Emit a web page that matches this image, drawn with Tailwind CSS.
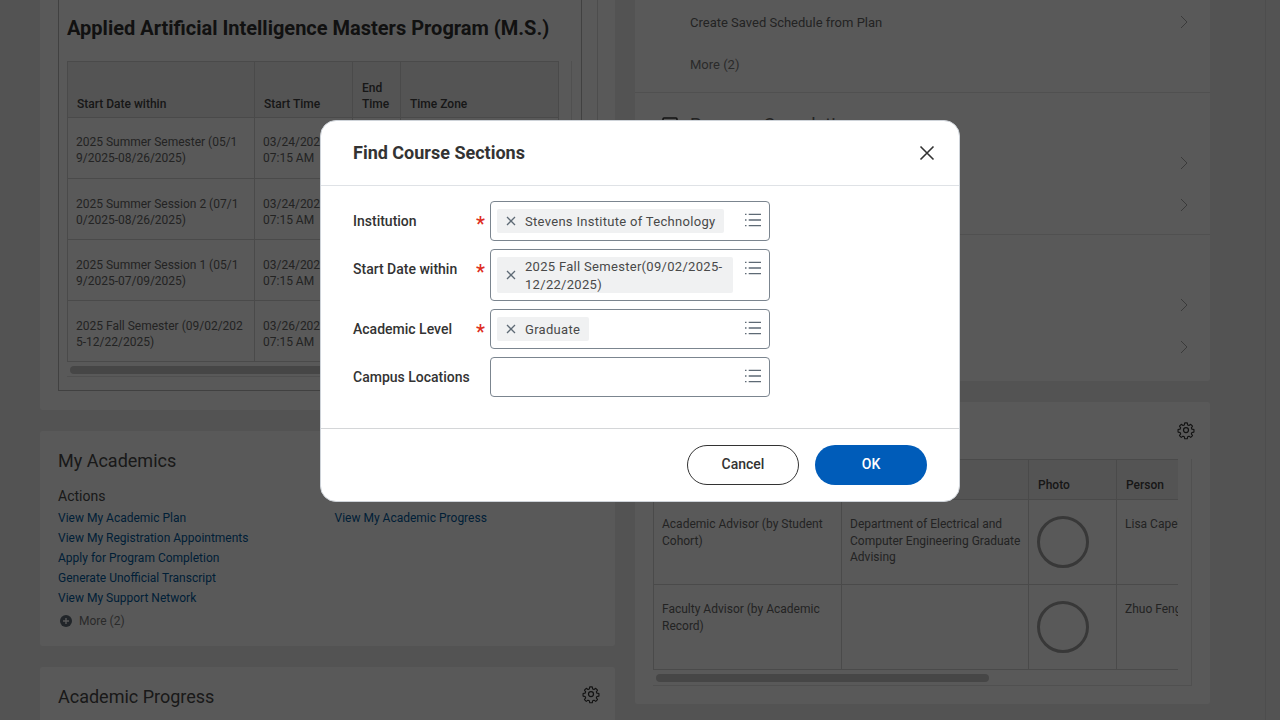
<!DOCTYPE html>
<html lang="en">
<head>
<meta charset="UTF-8">
<title>Find Course Sections</title>
<script src="https://cdn.jsdelivr.net/npm/@tailwindcss/browser@4"></script>
</head>
<body class="relative w-[1280px] h-[720px] overflow-hidden bg-[#eeeeee] font-['Roboto',sans-serif] text-[#494949]">

<!-- page behind the dialog -->
<div class="flex items-start gap-5 pl-10 -mt-5 border-r border-[#dcdcdc] w-[1266px] h-[740px]">

  <!-- left column -->
  <div class="w-[575px] shrink-0 flex flex-col gap-[21px]">
    <section class="bg-white rounded-[3px] pl-[18px] pr-[17px] pb-[19px]">
      <div class="border-r border-[#dcdcdc] pr-[15px]">
        <div class="border border-[#b9b9b9] border-t-0 pl-2 pr-[9px] pt-[34px] pb-[13px]">
          <h1 class="text-[20px] leading-[28px] font-bold text-[#333] mb-[19px] whitespace-nowrap">Applied Artificial Intelligence Masters Program (M.S.)</h1>
          <div class="w-[505px] border-r border-b border-[#e6e6e6] h-[316px]">
            <table class="table-fixed w-[491px] border-collapse text-[12px] leading-[16px]">
              <colgroup><col class="w-[187px]"><col class="w-[98px]"><col class="w-[48px]"><col class="w-[158px]"></colgroup>
              <tr class="h-[56px] bg-[#f0f0f0] font-medium align-bottom text-[#444]">
                <td class="border border-[#d4d4d4] px-[9px] pb-[5px]">Start Date within</td>
                <td class="border border-[#d4d4d4] px-[9px] pb-[5px]">Start Time</td>
                <td class="border border-[#d4d4d4] px-[9px] pb-[5px]">End Time</td>
                <td class="border border-[#d4d4d4] px-[9px] pb-[5px]">Time Zone</td>
              </tr>
              <tr class="h-[61px] align-top text-[#666]">
                <td class="border border-[#d4d4d4] px-2 pt-4 break-all">2025 Summer Semester (05/19/2025-08/26/2025)</td>
                <td class="border border-[#d4d4d4] px-2 pt-4">03/24/2025<br>07:15 AM</td>
                <td class="border border-[#d4d4d4]"></td><td class="border border-[#d4d4d4]"></td>
              </tr>
              <tr class="h-[61px] align-top text-[#666]">
                <td class="border border-[#d4d4d4] px-2 pt-[17px] break-all">2025 Summer Session 2 (07/10/2025-08/26/2025)</td>
                <td class="border border-[#d4d4d4] px-2 pt-[17px]">03/24/2025<br>07:15 AM</td>
                <td class="border border-[#d4d4d4]"></td><td class="border border-[#d4d4d4]"></td>
              </tr>
              <tr class="h-[61px] align-top text-[#666]">
                <td class="border border-[#d4d4d4] px-2 pt-[17px] break-all">2025 Summer Session 1 (05/19/2025-07/09/2025)</td>
                <td class="border border-[#d4d4d4] px-2 pt-[17px]">03/24/2025<br>07:15 AM</td>
                <td class="border border-[#d4d4d4]"></td><td class="border border-[#d4d4d4]"></td>
              </tr>
              <tr class="h-[61px] align-top text-[#666]">
                <td class="border border-[#d4d4d4] px-2 pt-[17px] break-all">2025 Fall Semester (09/02/2025-12/22/2025)</td>
                <td class="border border-[#d4d4d4] px-2 pt-[17px]">03/26/2025<br>07:15 AM</td>
                <td class="border border-[#d4d4d4]"></td><td class="border border-[#d4d4d4]"></td>
              </tr>
            </table>
            <div class="ml-[3px] mt-1 h-2 w-[420px] rounded-full bg-[#c8c8c8]"></div>
          </div>
        </div>
      </div>
    </section>

    <section class="bg-white rounded-[3px] px-[18px] pt-[18px] h-[215px]">
      <h2 class="text-[18px] leading-[24px] text-[#494949]">My Academics</h2>
      <h3 class="mt-[13px] text-[14px] leading-[20px] text-[#494949]">Actions</h3>
      <div class="flex mt-[2px] text-[12px] leading-[20px] text-[#005a9e]">
        <ul class="w-[276.5px]">
          <li>View My Academic Plan</li>
          <li>View My Registration Appointments</li>
          <li>Apply for Program Completion</li>
          <li>Generate Unofficial Transcript</li>
          <li>View My Support Network</li>
        </ul>
        <ul><li>View My Academic Progress</li></ul>
      </div>
      <div class="flex items-center gap-[7px] pl-[2px] mt-[3px] text-[12px] leading-[20px] text-[#7a7a7a]">
        <svg class="w-3 h-3" viewBox="0 0 12 12"><circle cx="6" cy="6" r="6" fill="#5e6a75"/><path d="M6 3v6M3 6h6" stroke="#fff" stroke-width="1.4"/></svg>
        <span>More (2)</span>
      </div>
    </section>

    <section class="bg-white rounded-[3px] px-[18px] pt-[18px] h-[60px] flex justify-between items-start">
      <h2 class="text-[18px] leading-[24px]">Academic Progress</h2>
      <svg class="w-5 h-5 -mr-[4px] -mt-[1px]" viewBox="0 0 24 24" fill="none" stroke="#333" stroke-width="1.5"><circle cx="12" cy="12" r="3"/><path d="M10.3 2.5h3.4l.5 2.7 1.8.8 2.3-1.6 2.4 2.4-1.6 2.3.8 1.8 2.7.5v3.4l-2.7.5-.8 1.8 1.6 2.3-2.4 2.4-2.3-1.6-1.8.8-.5 2.7h-3.4l-.5-2.7-1.8-.8-2.3 1.6-2.4-2.4 1.6-2.3-.8-1.8-2.7-.5v-3.4l2.7-.5.8-1.8-1.6-2.3 2.4-2.4 2.3 1.6 1.8-.8z" stroke-linejoin="round" transform="translate(1.2 1.2) scale(.9)"/></svg>
    </section>
  </div>

  <!-- right column -->
  <div class="w-[575px] shrink-0 flex flex-col gap-[21px]">
    <section class="bg-white rounded-[3px] h-[401px] text-[13px] leading-[20px] text-[#666]">
      <div class="h-[113px] border-b border-[#e6e6e6] pl-[55px] pr-5 pt-[33px]">
        <div class="flex justify-between items-center h-5"><span>Create Saved Schedule from Plan</span>
          <svg class="w-[8px] h-[14px] mr-[2px] mb-[2px]" viewBox="0 0 8 14" fill="none" stroke="#a6a6a6"><path d="M1 1l6 6-6 6"/></svg></div>
        <div class="mt-[22px] text-[#7a7a7a]">More (2)</div>
      </div>
      <div class="h-[142px] border-b border-[#e6e6e6] pl-[27px] pr-5 pt-[20px]">
        <div class="flex items-center gap-3 text-[18px] leading-[24px]">
          <svg class="w-4 h-4" viewBox="0 0 16 16" fill="none" stroke="#333" stroke-width="1.5"><rect x="1" y="1" width="14" height="14" rx="1"/></svg>
          <span>Program Completion</span>
        </div>
        <div class="flex flex-col items-end gap-[28px] mt-[19px] pr-[2px]">
          <svg class="w-[8px] h-[14px]" viewBox="0 0 8 14" fill="none" stroke="#a6a6a6"><path d="M1 1l6 6-6 6"/></svg>
          <svg class="w-[8px] h-[14px]" viewBox="0 0 8 14" fill="none" stroke="#a6a6a6"><path d="M1 1l6 6-6 6"/></svg>
        </div>
      </div>
      <div class="flex flex-col items-end gap-[28px] pr-[22px] pt-[63px]">
        <svg class="w-[8px] h-[14px]" viewBox="0 0 8 14" fill="none" stroke="#a6a6a6"><path d="M1 1l6 6-6 6"/></svg>
        <svg class="w-[8px] h-[14px]" viewBox="0 0 8 14" fill="none" stroke="#a6a6a6"><path d="M1 1l6 6-6 6"/></svg>
      </div>
    </section>

    <section class="bg-white rounded-[3px] h-[302px] pl-[18px] pt-[18px]">
      <div class="flex justify-end pr-[14px] h-5">
        <svg class="w-5 h-5" viewBox="0 0 24 24" fill="none" stroke="#333" stroke-width="1.5"><circle cx="12" cy="12" r="3"/><path d="M10.3 2.5h3.4l.5 2.7 1.8.8 2.3-1.6 2.4 2.4-1.6 2.3.8 1.8 2.7.5v3.4l-2.7.5-.8 1.8 1.6 2.3-2.4 2.4-2.3-1.6-1.8.8-.5 2.7h-3.4l-.5-2.7-1.8-.8-2.3 1.6-2.4-2.4 1.6-2.3-.8-1.8-2.7-.5v-3.4l2.7-.5.8-1.8-1.6-2.3 2.4-2.4 2.3 1.6 1.8-.8z" stroke-linejoin="round" transform="translate(1.2 1.2) scale(.9)"/></svg>
      </div>
      <div class="mt-[19px] w-[539px] h-[227px] border-r border-b border-[#e6e6e6]">
        <div class="w-[525px] overflow-hidden">
          <table class="table-fixed w-[640px] border-collapse text-[12px] leading-[16.5px] text-[#666]">
            <colgroup><col class="w-[188px]"><col class="w-[187px]"><col class="w-[88px]"><col class="w-[177px]"></colgroup>
            <tr class="h-10 bg-[#f0f0f0] font-medium align-bottom text-[#444]">
              <td class="border border-[#d4d4d4] px-[9px] pb-[6px]"></td>
              <td class="border border-[#d4d4d4] px-[9px] pb-[6px]"></td>
              <td class="border border-[#d4d4d4] px-[9px] pb-[6px]">Photo</td>
              <td class="border border-[#d4d4d4] px-[9px] pb-[6px]">Person</td>
            </tr>
            <tr class="h-[85px] align-top">
              <td class="border border-[#d4d4d4] px-2 pt-4">Academic Advisor (by Student Cohort)</td>
              <td class="border border-[#d4d4d4] pl-2 pt-4">Department of Electrical and Computer Engineering Graduate Advising</td>
              <td class="border border-[#d4d4d4] pl-2 pt-4"><div class="w-[52px] h-[52px] rounded-full border-[3px] border-[#a0a0a0]"></div></td>
              <td class="border border-[#d4d4d4] px-2 pt-4 whitespace-nowrap">Lisa Capelli</td>
            </tr>
            <tr class="h-[85px] align-top">
              <td class="border border-[#d4d4d4] px-2 pt-4">Faculty Advisor (by Academic Record)</td>
              <td class="border border-[#d4d4d4] px-2 pt-4"></td>
              <td class="border border-[#d4d4d4] pl-2 pt-4"><div class="w-[52px] h-[52px] rounded-full border-[3px] border-[#a0a0a0]"></div></td>
              <td class="border border-[#d4d4d4] px-2 pt-4 whitespace-nowrap">Zhuo Feng</td>
            </tr>
          </table>
        </div>
        <div class="ml-[3px] mt-1 h-2 w-[333px] rounded-full bg-[#c8c8c8]"></div>
      </div>
    </section>
  </div>
</div>

<!-- overlay -->
<div class="absolute inset-0 bg-black/65"></div>

<!-- dialog -->
<div class="absolute left-[320px] top-[120px] w-[640px] h-[382px] bg-white rounded-2xl border border-[#ced3d9] flex flex-col text-[#333]">
  <div class="h-[65px] border-b border-[#dfe2e6] flex items-center justify-between pl-8 pr-5 shrink-0">
    <h2 class="text-[18px] leading-[28px] font-bold pb-px">Find Course Sections</h2>
    <svg class="w-6 h-6" viewBox="0 0 24 24" fill="none" stroke="#333" stroke-width="1.6"><path d="M5.5 5.5l13 13M18.5 5.5l-13 13"/></svg>
  </div>

  <div class="flex-1 flex flex-col gap-2 pl-8 pt-[15px] text-[14px]">
    <div class="flex items-center">
      <label class="w-[123px] font-medium">Institution</label>
      <span class="w-[14px] text-[20px] leading-none text-[#de2e21] font-medium pt-[5px]">*</span>
      <div class="w-[280px] h-10 border border-[#7b858f] rounded-[4px] pl-[6px] pr-2 flex items-center justify-between">
        <span class="h-6 bg-[#f0f1f2] rounded-[2px] flex items-center pl-2 pr-[9px] gap-2 text-[13px] tracking-[.3px] text-[#494949]">
          <svg class="w-3 h-3 shrink-0" viewBox="0 0 12 12" fill="none" stroke="#5e6a75" stroke-width="1.3"><path d="M2 2l8 8M10 2l-8 8"/></svg>
          <span class="pt-[2px]">Stevens Institute of Technology</span></span>
        <svg class="w-4 h-[14px] shrink-0 mb-[2px]" viewBox="0 0 16 14" fill="none" stroke="#5e6a75" stroke-width="1.3"><path d="M3.7 1.3H16M3.7 7H16M3.7 12.7H16M0 1.3h1.5M0 7h1.5M0 12.7h1.5"/></svg>
      </div>
    </div>
    <div class="flex items-start">
      <label class="w-[123px] font-medium pt-[10px]">Start Date within</label>
      <span class="w-[14px] text-[20px] leading-none text-[#de2e21] font-medium pt-[5px] mt-2">*</span>
      <div class="w-[280px] h-[52px] border border-[#7b858f] rounded-[4px] pl-[6px] pr-2 flex items-start pt-[7px] justify-between">
        <span class="w-[236px] h-9 bg-[#f0f1f2] rounded-[2px] flex items-center pl-2 gap-2 text-[13px] leading-[18px] tracking-[.3px] text-[#494949]">
          <svg class="w-3 h-3 shrink-0" viewBox="0 0 12 12" fill="none" stroke="#5e6a75" stroke-width="1.3"><path d="M2 2l8 8M10 2l-8 8"/></svg>
          <span class="pt-[2px]">2025 Fall Semester(09/02/2025-12/22/2025)</span></span>
        <svg class="w-4 h-[14px] shrink-0 mt-[4px]" viewBox="0 0 16 14" fill="none" stroke="#5e6a75" stroke-width="1.3"><path d="M3.7 1.3H16M3.7 7H16M3.7 12.7H16M0 1.3h1.5M0 7h1.5M0 12.7h1.5"/></svg>
      </div>
    </div>
    <div class="flex items-center">
      <label class="w-[123px] font-medium">Academic Level</label>
      <span class="w-[14px] text-[20px] leading-none text-[#de2e21] font-medium pt-[5px]">*</span>
      <div class="w-[280px] h-10 border border-[#7b858f] rounded-[4px] pl-[6px] pr-2 flex items-center justify-between">
        <span class="h-6 bg-[#f0f1f2] rounded-[2px] flex items-center pl-2 pr-[9px] gap-2 text-[13px] tracking-[.3px] text-[#494949]">
          <svg class="w-3 h-3 shrink-0" viewBox="0 0 12 12" fill="none" stroke="#5e6a75" stroke-width="1.3"><path d="M2 2l8 8M10 2l-8 8"/></svg>
          <span class="pt-[2px]">Graduate</span></span>
        <svg class="w-4 h-[14px] shrink-0 mb-[2px]" viewBox="0 0 16 14" fill="none" stroke="#5e6a75" stroke-width="1.3"><path d="M3.7 1.3H16M3.7 7H16M3.7 12.7H16M0 1.3h1.5M0 7h1.5M0 12.7h1.5"/></svg>
      </div>
    </div>
    <div class="flex items-center">
      <label class="w-[137px] font-medium">Campus Locations</label>
      <div class="w-[280px] h-10 border border-[#7b858f] rounded-[4px] pr-2 flex items-center justify-end">
        <svg class="w-4 h-[14px] shrink-0 mb-[2px]" viewBox="0 0 16 14" fill="none" stroke="#5e6a75" stroke-width="1.3"><path d="M3.7 1.3H16M3.7 7H16M3.7 12.7H16M0 1.3h1.5M0 7h1.5M0 12.7h1.5"/></svg>
      </div>
    </div>
  </div>

  <div class="h-[73px] border-t border-[#d4d6d8] flex justify-end items-start gap-4 pt-4 pr-8 shrink-0">
    <button class="w-28 h-10 rounded-full border border-[#333] text-[14px] font-medium text-[#333] pb-[2px]">Cancel</button>
    <button class="w-28 h-10 rounded-full bg-[#005cb9] text-[14px] font-medium text-white pb-[2px]">OK</button>
  </div>
</div>

</body>
</html>
